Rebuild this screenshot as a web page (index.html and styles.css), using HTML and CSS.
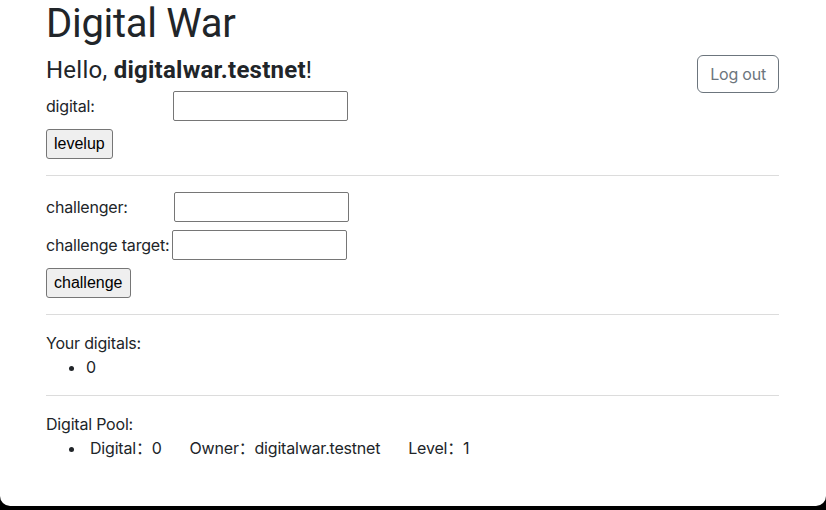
FILE: index.html
```html
<!DOCTYPE html>
<html lang="en">
<head>
<meta charset="utf-8">
<title>Digital War</title>
<link rel="stylesheet" href="styles.css">
</head>
<body>
<div class="window">
  <main class="container">
    <h1 class="title">Digital War</h1>
    <div class="header">
      <h4 class="greeting">Hello, <strong>digitalwar.testnet</strong>!</h4>
      <button class="btn-logout" type="button">Log out</button>
    </div>

    <form class="section">
      <div class="field">
        <label class="field-label" for="digital">digital:</label>
        <input class="field-input" id="digital" type="text">
      </div>
      <button class="btn-plain" type="button">levelup</button>
    </form>

    <hr class="divider">

    <form class="section">
      <div class="field">
        <label class="field-label field-label-wide" for="challenger">challenger:</label>
        <input class="field-input" id="challenger" type="text">
      </div>
      <div class="field">
        <label class="field-label field-label-auto" for="target">challenge target:</label>
        <input class="field-input" id="target" type="text">
      </div>
      <button class="btn-plain" type="button">challenge</button>
    </form>

    <hr class="divider">

    <div class="list-block">
      <div class="list-title">Your digitals:</div>
      <ul class="list">
        <li>0</li>
      </ul>
    </div>

    <hr class="divider">

    <div class="list-block">
      <div class="list-title">Digital Pool:</div>
      <ul class="list">
        <li class="pool-item"><span class="pool-cell">Digital：0</span><span class="pool-cell">Owner：digitalwar.testnet</span><span class="pool-cell">Level：1</span></li>
      </ul>
    </div>
  </main>
</div>
</body>
</html>
```

FILE: styles.css
```css
* {
  box-sizing: border-box;
}

html, body {
  margin: 0;
  padding: 0;
  background: #000;
}

body {
  font-family: Inter, "Noto Sans CJK SC", "Noto Sans", sans-serif;
  font-size: 16px;
  line-height: 1.5;
  letter-spacing: -0.2px;
  color: #212529;
}

.window {
  background: #fff;
  height: 506px;
  border-radius: 0 0 10px 10px;
  overflow: hidden;
  padding: 0 47px 0 46px;
}

.container {
  margin: 0;
  padding: 0;
}

.title {
  margin: 0 0 8px;
  font-family: Roboto, Inter, sans-serif;
  font-size: 40px;
  font-weight: 400;
  line-height: 1.2;
  letter-spacing: -0.3px;
}

.header {
  display: flex;
  justify-content: space-between;
  align-items: flex-start;
}

.greeting {
  margin: 0 0 6px;
  font-family: Roboto, Inter, sans-serif;
  font-size: 24px;
  font-weight: 400;
  line-height: 1.2;
  letter-spacing: 0.25px;
}

.greeting strong {
  font-weight: 700;
}

.btn-logout {
  flex: none;
  margin: -1px 0 -2px;
  height: 38px;
  padding: 6px 12px;
  font-family: inherit;
  font-size: 16px;
  line-height: 1.5;
  letter-spacing: -0.2px;
  color: #6c757d;
  background: transparent;
  border: 1px solid #6c757d;
  border-radius: 6px;
}

.section {
  margin: 0;
}

.field {
  display: flex;
  align-items: center;
  height: 30px;
  margin-bottom: 8px;
}

.field-label {
  width: 127px;
  flex: none;
}

.field-label-wide {
  width: 128px;
}

.field-label-auto {
  width: auto;
  margin-right: 3px;
}

.field-input {
  width: 175px;
  height: 30px;
  padding: 1px 2px;
  font-family: inherit;
  font-size: 16px;
  border: 1px solid #767676;
  border-radius: 2px;
  background: #fff;
}

.btn-plain {
  display: block;
  height: 30px;
  padding: 1px 7px;
  font-family: "Liberation Sans", Arial, sans-serif;
  font-size: 16px;
  line-height: 1;
  color: #000;
  background: #efefef;
  border: 1px solid #767676;
  border-radius: 3px;
}

.divider {
  margin: 16px 0;
  border: 0;
  border-top: 1px solid #dcdcdc;
  height: 0;
}

.list-title {
  line-height: 24px;
}

.list {
  margin: 0 0 16px;
  padding-left: 40px;
}

.pool-item {
  padding-left: 4px;
}

.pool-cell {
  margin-right: 28px;
}
```
